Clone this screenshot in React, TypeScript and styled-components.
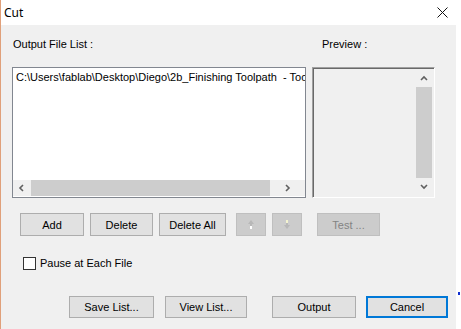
import React from "react";
import styled, { createGlobalStyle } from "styled-components";

const Global = createGlobalStyle`
  html, body {
    margin: 0;
    padding: 0;
    background: #ffffff;
  }
  * { box-sizing: border-box; }
`;

const Chevron = ({ dir, color = "#606060" }: { dir: "left" | "right" | "up" | "down"; color?: string }) => {
  const paths: Record<string, string> = {
    left: "M5 1 L2 4 L5 7",
    right: "M2 1 L5 4 L2 7",
    up: "M1 5 L4 2 L7 5",
    down: "M1 2 L4 5 L7 2",
  };
  return (
    <svg width="8" height="8" viewBox="0 0 8 8">
      <path d={paths[dir]} stroke={color} strokeWidth="1.6" fill="none" />
    </svg>
  );
};

const App = () => {
  return (
    <>
      <Global />
      <Window>
        <TitleBar>
          <Title>Cut</Title>
          <CloseIcon>
            <svg width="11" height="11" viewBox="0 0 11 11">
              <path d="M0.5 0.5 L10.5 10.5 M10.5 0.5 L0.5 10.5" stroke="#111" strokeWidth="1" />
            </svg>
          </CloseIcon>
        </TitleBar>
        <Body>
          <Panel>
            <LabelRow>
              <Label>Output File List :</Label>
              <Label $left={322}>Preview :</Label>
            </LabelRow>
            <BoxRow>
              <ListBox>
                <ListText>C:\Users\fablab\Desktop\Diego\2b_Finishing Toolpath&nbsp; - Tool</ListText>
                <HScroll>
                  <ArrowCell $w={18}><Chevron dir="left" /></ArrowCell>
                  <HThumb />
                  <ArrowCell $w={35}><Chevron dir="right" /></ArrowCell>
                </HScroll>
              </ListBox>
              <PreviewBox>
                <VScroll>
                  <VArrow><Chevron dir="up" /></VArrow>
                  <VThumb />
                  <VArrow><Chevron dir="down" /></VArrow>
                </VScroll>
              </PreviewBox>
            </BoxRow>
            <ButtonRow>
              <Button $w={64}>Add</Button>
              <Button $w={63} $gap={6}>Delete</Button>
              <Button $w={67} $gap={6}>Delete All</Button>
              <Button $w={30} $gap={10} disabled>
                <svg width="6" height="9" viewBox="0 0 6 9">
                  <path d="M3 0 L6 4 L4 4 L4 6 L2 6 L2 4 L0 4 Z" fill="#b8b8b8" />
                  <rect x="2" y="6" width="2" height="3" fill="#ffffff" />
                </svg>
              </Button>
              <Button $w={30} $gap={6} disabled>
                <svg width="6" height="9" viewBox="0 0 6 9">
                  <rect x="2" y="0" width="2" height="3" fill="#f4f4d0" />
                  <path d="M0 5 L2 5 L2 3 L4 3 L4 5 L6 5 L3 9 Z" fill="#b8b8b8" />
                </svg>
              </Button>
              <Button $w={63} $gap={15} disabled>Test ...</Button>
            </ButtonRow>
            <CheckRow>
              <CheckBox />
              <CheckLabel>Pause at Each File</CheckLabel>
            </CheckRow>
            <BottomRow>
              <Button $w={85} $h={22}>Save List...</Button>
              <Button $w={82} $h={22} $gap={11}>View List...</Button>
              <Button $w={84} $h={22} $gap={25}>Output</Button>
              <Button $w={82} $h={22} $gap={10} $default>Cancel</Button>
            </BottomRow>
          </Panel>
          <RightStrip>
            <Dot />
          </RightStrip>
        </Body>
      </Window>
    </>
  );
};

const Window = styled.div`
  width: 461px;
  height: 329px;
  display: flex;
  flex-direction: column;
  border-left: 1px solid #e0a07a;
  font-family: "Liberation Sans", Arial, sans-serif;
  font-size: 11px;
  color: #000;
`;

const TitleBar = styled.div`
  height: 25px;
  background: #ffffff;
  display: flex;
  align-items: center;
  justify-content: space-between;
  padding: 0 13px 0 3px;
`;

const Title = styled.span`
  font-family: "Noto Sans", "Liberation Sans", sans-serif;
  font-size: 12px;
  color: #000;
`;

const CloseIcon = styled.span`
  display: flex;
  align-items: center;
`;

const Body = styled.div`
  flex: 1;
  display: flex;
`;

const Panel = styled.div`
  width: 455px;
  background: #f0f0f0;
  display: flex;
  flex-direction: column;
  padding: 13px 0 0 11px;
`;

const RightStrip = styled.div`
  flex: 1;
  background: #ffffff;
  position: relative;
`;

const Dot = styled.div`
  position: absolute;
  left: 2px;
  top: 267px;
  width: 2px;
  height: 3px;
  background: #1030d0;
`;

const LabelRow = styled.div`
  position: relative;
  height: 13px;
`;

const Label = styled.span<{ $left?: number }>`
  position: absolute;
  left: ${(p) => (p.$left ? p.$left - 12 : 1)}px;
  top: 0;
  line-height: 13px;
`;

const BoxRow = styled.div`
  display: flex;
  gap: 6px;
  margin-top: 16px;
  height: 131px;
`;

const ListBox = styled.div`
  width: 294px;
  height: 131px;
  background: #ffffff;
  border: 1px solid #828790;
  display: flex;
  flex-direction: column;
  justify-content: space-between;
  overflow: hidden;
`;

const ListText = styled.div`
  padding: 3px 0 0 3px;
  white-space: nowrap;
  line-height: 13px;
`;

const HScroll = styled.div`
  height: 16px;
  margin-bottom: 1px;
  background: #f0f0f0;
  display: flex;
  align-items: stretch;
`;

const ArrowCell = styled.div<{ $w: number }>`
  width: ${(p) => p.$w}px;
  display: flex;
  align-items: center;
  justify-content: center;
`;

const HThumb = styled.div`
  flex: 1;
  background: #cdcdcd;
`;

const PreviewBox = styled.div`
  width: 123px;
  height: 131px;
  background: #f0f0f0;
  border-top: 1px solid #a0a0a0;
  border-left: 1px solid #a0a0a0;
  border-right: 1px solid #ffffff;
  border-bottom: 1px solid #ffffff;
  box-shadow: inset 1px 1px 0 #696969;
  display: flex;
  justify-content: flex-end;
  padding: 2px 2px 2px 0;
`;

const VScroll = styled.div`
  width: 16px;
  display: flex;
  flex-direction: column;
  background: #f0f0f0;
`;

const VArrow = styled.div`
  height: 17px;
  display: flex;
  align-items: center;
  justify-content: center;
`;

const VThumb = styled.div`
  flex: 1;
  background: #cdcdcd;
`;

const ButtonRow = styled.div`
  display: flex;
  margin-top: 15px;
  padding-left: 8px;
`;

const Button = styled.button<{ $w: number; $h?: number; $gap?: number; $default?: boolean }>`
  width: ${(p) => p.$w}px;
  height: ${(p) => p.$h ?? 23}px;
  margin-left: ${(p) => p.$gap ?? 0}px;
  padding: 0;
  font-family: "Liberation Sans", Arial, sans-serif;
  font-size: 11px;
  color: #000;
  background: #e1e1e1;
  border: 1px solid #adadad;
  display: flex;
  align-items: center;
  justify-content: center;

  ${(p) => p.$default && `
    border: 2px solid #0078d7;
  `}

  &:disabled {
    background: #cccccc;
    border-color: #bfbfbf;
    color: #838383;
  }
`;

const CheckRow = styled.div`
  display: flex;
  align-items: center;
  margin-top: 21px;
  padding-left: 11px;
  gap: 4px;
`;

const CheckBox = styled.span`
  width: 13px;
  height: 13px;
  background: #ffffff;
  border: 1px solid #333333;
`;

const CheckLabel = styled.span`
  line-height: 13px;
`;

const BottomRow = styled.div`
  display: flex;
  margin-top: 26px;
  padding-left: 57px;
`;

export default App;
